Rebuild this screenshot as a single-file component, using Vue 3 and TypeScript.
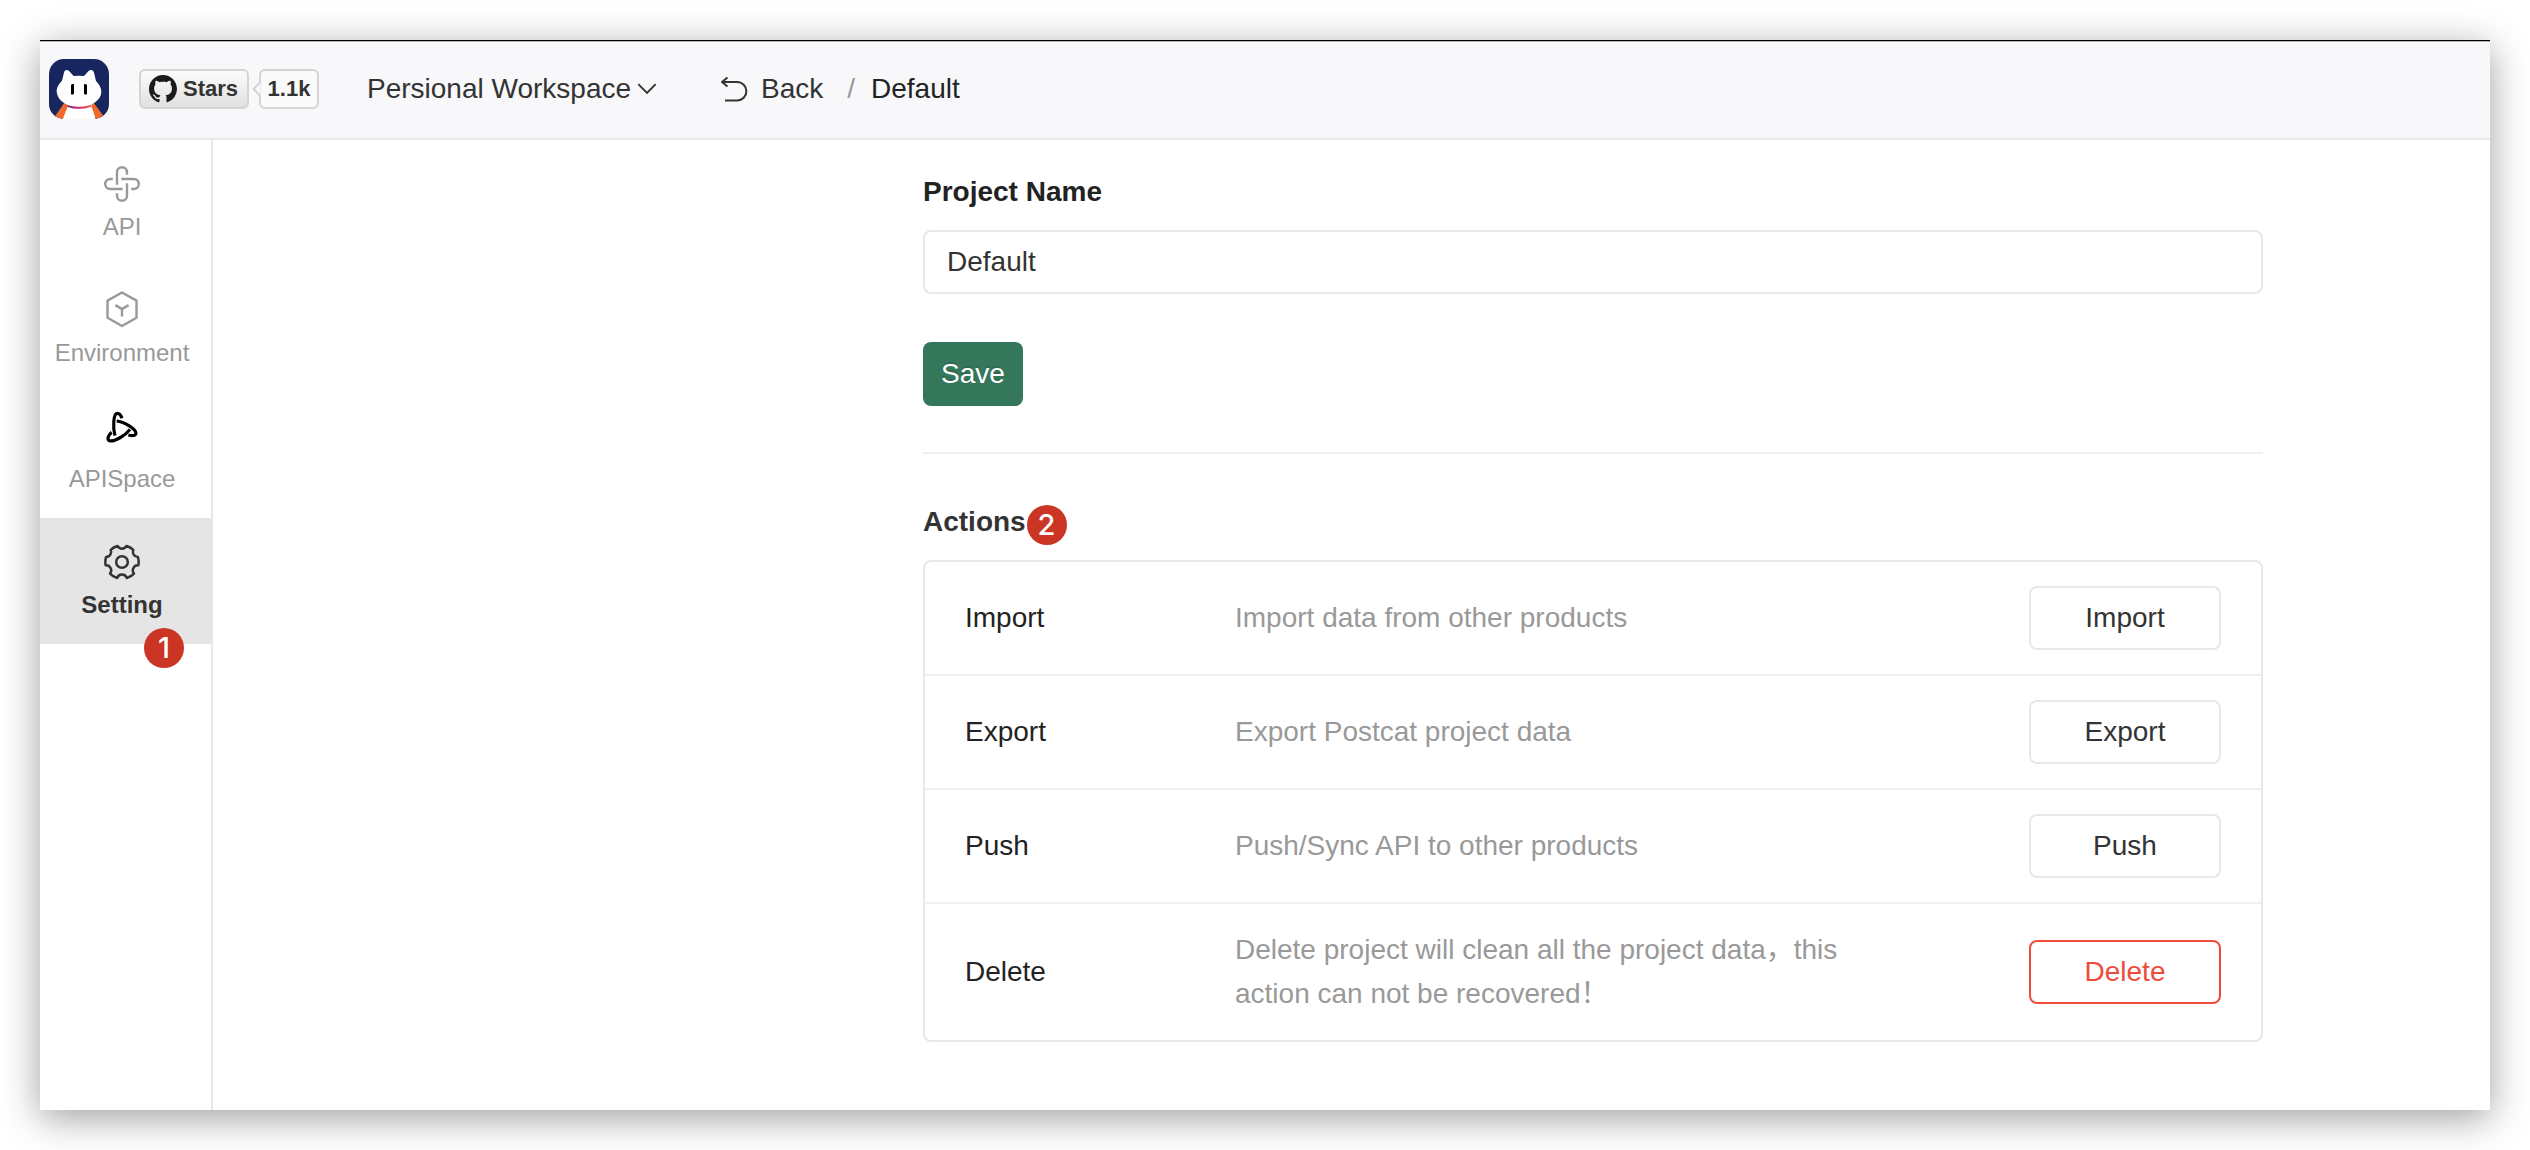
<script setup lang="ts">
import { ref } from 'vue'

interface NavItem {
  key: string
  label: string
}

interface ActionItem {
  title: string
  desc: string
  danger?: boolean
}

const active = ref('setting')
const projectName = ref('Default')

const navItems: NavItem[] = [
  { key: 'api', label: 'API' },
  { key: 'env', label: 'Environment' },
  { key: 'space', label: 'APISpace' },
  { key: 'setting', label: 'Setting' },
]

const actions: ActionItem[] = [
  { title: 'Import', desc: 'Import data from other products' },
  { title: 'Export', desc: 'Export Postcat project data' },
  { title: 'Push', desc: 'Push/Sync API to other products' },
  {
    title: 'Delete',
    desc: 'Delete project will clean all the project data，this action can not be recovered！',
    danger: true,
  },
]
</script>

<template>
  <div class="stage">
    <div class="window">
      <header class="topbar">
        <svg class="logo" viewBox="0 0 180 180">
          <defs>
            <clipPath id="logoClip"><rect width="180" height="180" rx="45" /></clipPath>
            <linearGradient id="collar" x1="0" x2="1" y1="0" y2="0">
              <stop offset="0" stop-color="#6a2383" />
              <stop offset="0.55" stop-color="#e0407a" />
              <stop offset="1" stop-color="#e8502f" />
            </linearGradient>
          </defs>
          <g clip-path="url(#logoClip)">
            <rect width="180" height="180" fill="#18265f" />
            <path d="M48 136L41 181H140L132 136Z" fill="#fff" />
            <path d="M47 130L57 140L41 181L17 173Z M133 130L127 142L141 181L164 172Z" fill="#f0682c" />
            <path
              d="M44 45C45 34 53 29 61 37L74 51Q90 49 105 51L118 37C126 29 134 34 136 45L141 66C150 76 157 86 157 98C156 127 122 144 90 144C57 144 24 126 23 96C23 84 31 73 39 65Z"
              fill="#fff"
            />
            <path d="M53 138Q90 148 127 138V143Q90 156 56 144Z" fill="url(#collar)" />
            <path d="M66 78Q70 73 75 76V104Q70 108 66 106Z M105 76Q110 73 114 78V106Q109 108 105 104Z" fill="#000" />
          </g>
        </svg>

        <div class="github">
          <div class="gh-btn">
            <svg viewBox="0 0 16 16" width="28" height="28">
              <path
                fill="#1b1b1b"
                d="M8 0C3.58 0 0 3.58 0 8c0 3.54 2.29 6.53 5.47 7.59.4.07.55-.17.55-.38 0-.19-.01-.82-.01-1.49-2.01.37-2.53-.49-2.69-.94-.09-.23-.48-.94-.82-1.13-.28-.15-.68-.52-.01-.53.63-.01 1.08.58 1.23.82.72 1.21 1.87.87 2.33.66.07-.52.28-.87.51-1.07-1.78-.2-3.64-.89-3.64-3.95 0-.87.31-1.59.82-2.15-.08-.2-.36-1.02.08-2.12 0 0 .67-.21 2.2.82.64-.18 1.32-.27 2-.27s1.36.09 2 .27c1.53-1.04 2.2-.82 2.2-.82.44 1.1.16 1.92.08 2.12.51.56.82 1.27.82 2.15 0 3.07-1.87 3.75-3.65 3.95.29.25.54.73.54 1.48 0 1.07-.01 1.93-.01 2.2 0 .21.15.46.55.38A8.01 8.01 0 0 0 16 8c0-4.42-3.58-8-8-8z"
              />
            </svg>
            <span>Stars</span>
          </div>
          <svg class="gh-arrow" viewBox="0 0 10 18" width="10" height="18">
            <path d="M8.5 1.8L1.6 9L8.5 16.2" fill="#fafafa" stroke="#d4d4d4" stroke-width="2" />
          </svg>
          <div class="gh-count">1.1k</div>
        </div>

        <div class="workspace">
          <span>Persional Workspace</span>
          <svg viewBox="0 0 20 12" width="20" height="12">
            <path d="M1.3 1.2L10 10L18.7 1.2" fill="none" stroke="#333" stroke-width="1.9" />
          </svg>
        </div>

        <nav class="crumbs">
          <svg viewBox="0 0 28 26" width="28" height="26">
            <path
              d="M7.5 1.5L2 6L7.5 10.5M2 6H17.2a9.2 9.2 0 0 1 0 18.4H5"
              fill="none"
              stroke="#333"
              stroke-width="2"
              stroke-linejoin="round"
            />
          </svg>
          <span class="back">Back</span>
          <span class="slash">/</span>
          <span class="current">Default</span>
        </nav>
      </header>

      <div class="body">
        <aside class="sidebar">
          <div
            v-for="item in navItems"
            :key="item.key"
            class="nav-item"
            :class="{ active: item.key === active }"
            @click="active = item.key"
          >
            <svg
              v-if="item.key === 'api'"
              class="nav-icon"
              viewBox="-20 -20 40 40"
              fill="none"
              stroke="#999"
              stroke-width="2.4"
            >
              <path
                v-for="angle in [0, 90, 180, 270]"
                :key="angle"
                :transform="`rotate(${angle})`"
                d="M-5 0.7V-11.8a5 5 0 0 1 10 0V-9.2"
              />
            </svg>
            <svg
              v-else-if="item.key === 'env'"
              class="nav-icon"
              viewBox="-20 -19 40 40"
              fill="none"
              stroke="#999"
              stroke-width="2.4"
            >
              <path d="M0 -16.5L14.5 -8.4V8.8L0 17L-14.5 8.8V-8.4Z" stroke-linejoin="round" />
              <path d="M-6.6 -3.9L0 0L6.6 -3.9M0 0V7.4" />
            </svg>
            <svg v-else-if="item.key === 'space'" class="nav-icon" viewBox="246 78 120 120" fill="none" stroke="#000" stroke-width="9.5">
              <path d="M285 137C278 112 280 70 292 70C299 70 303 76 306 85" />
              <path d="M290 93C312 95 349 118 348 130C346 138 336 138 325 135" />
              <path d="M330 118C315 138 283 156 268 152C260 149 265 134 275 127" />
            </svg>
            <svg v-else class="nav-icon" viewBox="0 0 48 48" fill="none" stroke="#333" stroke-width="3" stroke-linejoin="round">
              <path
                d="M18.284 43.171a19.995 19.995 0 0 1-8.696-5.304 6 6 0 0 0-5.182-9.838A20.09 20.09 0 0 1 4 24c0-2.09.32-4.106.916-6H5a6 6 0 0 0 5.385-8.65 19.968 19.968 0 0 1 8.267-4.627A6 6 0 0 0 24 8a6 6 0 0 0 5.348-3.277 19.968 19.968 0 0 1 8.267 4.627A6 6 0 0 0 43.084 18c.595 1.894.916 3.91.916 6 0 1.38-.14 2.728-.406 4.03a6 6 0 0 0-5.182 9.838 19.995 19.995 0 0 1-8.696 5.303 6.003 6.003 0 0 0-11.432 0Z"
              />
              <circle cx="24" cy="24" r="7" />
            </svg>
            <span class="nav-label">{{ item.label }}</span>
            <span v-if="item.key === 'setting'" class="badge badge-nav">1</span>
          </div>
        </aside>

        <main class="content">
          <section class="panel">
            <h2 class="title">Project Name</h2>
            <input v-model="projectName" class="field" type="text" />
            <button class="save">Save</button>
            <div class="divider"></div>
            <h2 class="title actions-title">Actions<span class="badge badge-title">2</span></h2>
            <div class="table">
              <div v-for="action in actions" :key="action.title" class="row">
                <span class="row-title">{{ action.title }}</span>
                <span class="row-desc">{{ action.desc }}</span>
                <button class="row-btn" :class="{ danger: action.danger }">{{ action.title }}</button>
              </div>
            </div>
          </section>
        </main>
      </div>
    </div>
  </div>
</template>

<style>
body {
  margin: 0;
  background: #fff;
}
</style>

<style scoped>
.stage {
  box-sizing: border-box;
  width: 2530px;
  height: 1150px;
  padding: 40px;
  overflow: hidden;
  background: #fff;
  font-family: 'Liberation Sans', 'Noto Sans CJK SC', sans-serif;
  font-size: 28px;
  color: #333;
}

.window {
  display: flex;
  flex-direction: column;
  width: 2450px;
  height: 1070px;
  background: #fff;
  box-shadow: 0 8px 36px rgba(0, 0, 0, 0.38);
}

.topbar {
  box-sizing: border-box;
  display: flex;
  align-items: center;
  height: 100px;
  flex: none;
  padding-left: 9px;
  background: linear-gradient(#000 0 1px, #b4b4b6 1px 2px, #f8f8fa 2px);
  border-bottom: 2px solid #e8e8e8;
}

.logo {
  width: 60px;
  height: 60px;
}

.github {
  display: flex;
  align-items: center;
  margin-left: 30px;
  font-size: 22px;
  font-weight: 700;
}

.gh-btn,
.gh-count {
  box-sizing: border-box;
  display: flex;
  align-items: center;
  height: 40px;
  border: 2px solid #d4d4d4;
  border-radius: 6px;
}

.gh-btn {
  width: 110px;
  gap: 6px;
  padding-left: 8px;
  background: linear-gradient(#fcfcfc, #e0e0e0);
}

.gh-count {
  width: 60px;
  justify-content: center;
  background: #fafafa;
}

.gh-arrow {
  position: relative;
  z-index: 1;
  margin: 0 -3px 0 3px;
}

.workspace {
  display: flex;
  align-items: center;
  gap: 6px;
  width: 353px;
  margin-left: 48px;
}

.workspace span {
  white-space: nowrap;
}

.crumbs {
  display: flex;
  align-items: center;
}

.crumbs .back {
  margin-left: 13px;
}

.slash {
  margin-left: 24px;
  color: #999;
}

.current {
  margin-left: 16px;
  color: #222;
}

.body {
  display: flex;
  flex: 1;
  min-height: 0;
}

.sidebar {
  flex: none;
  width: 171px;
  border-right: 2px solid #e8e8e8;
}

.nav-item {
  position: relative;
  box-sizing: border-box;
  display: flex;
  flex-direction: column;
  align-items: center;
  height: 126px;
  padding: 24px 7px 0 0;
  color: #999;
  font-size: 24px;
}

.nav-item.active {
  background: #e5e5e5;
  color: #333;
  font-weight: 700;
}

.nav-icon {
  width: 40px;
  height: 40px;
  overflow: visible;
}

.nav-label {
  margin-top: 5px;
  line-height: 36px;
}

.badge {
  position: absolute;
  width: 40px;
  height: 40px;
  border-radius: 50%;
  background: #ca3524;
  color: #fff;
  font: 500 29px/40px Inter, sans-serif;
  text-align: center;
}

.badge-nav {
  left: 104px;
  top: 109.5px;
}

.badge-title {
  left: 103.5px;
  top: 2.5px;
}

.content {
  flex: 1;
  padding-left: 710px;
}

.panel {
  display: flex;
  flex-direction: column;
  width: 1340px;
  padding-top: 32px;
}

.title {
  position: relative;
  margin: 0;
  font-size: 28px;
  line-height: 40px;
  font-weight: 700;
  color: #222;
}

.field {
  box-sizing: border-box;
  width: 100%;
  height: 64px;
  margin: 18px 0 0;
  padding: 0 22px;
  border: 2px solid #e8e8e8;
  border-radius: 8px;
  outline: none;
  background: #fff;
  font: inherit;
  color: #333;
}

.save {
  width: 100px;
  height: 64px;
  margin-top: 48px;
  padding: 0;
  border: 0;
  border-radius: 8px;
  background: #35775b;
  color: #fff;
  font: inherit;
  text-shadow: 0 -2px 0 rgba(0, 0, 0, 0.12);
}

.divider {
  height: 2px;
  margin-top: 46px;
  background: #efefef;
}

.actions-title {
  margin-top: 48px;
  color: #333;
}

.table {
  margin-top: 18px;
  border: 2px solid #e8e8e8;
  border-radius: 8px;
}

.row {
  box-sizing: border-box;
  display: flex;
  align-items: center;
  height: 114px;
  padding: 0 40px;
  border-bottom: 2px solid #efefef;
}

.row:last-child {
  height: 136px;
  border-bottom: 0;
}

.row-title {
  width: 270px;
  color: #222;
}

.row-desc {
  width: 630px;
  line-height: 44px;
  color: #999;
}

.row-btn {
  box-sizing: border-box;
  width: 192px;
  height: 64px;
  margin-left: auto;
  padding: 0;
  border: 2px solid #e8e8e8;
  border-radius: 8px;
  background: #fff;
  font: inherit;
  color: #333;
}

.row-btn.danger {
  border-color: #ee4b3d;
  color: #ee4b3d;
}
</style>
